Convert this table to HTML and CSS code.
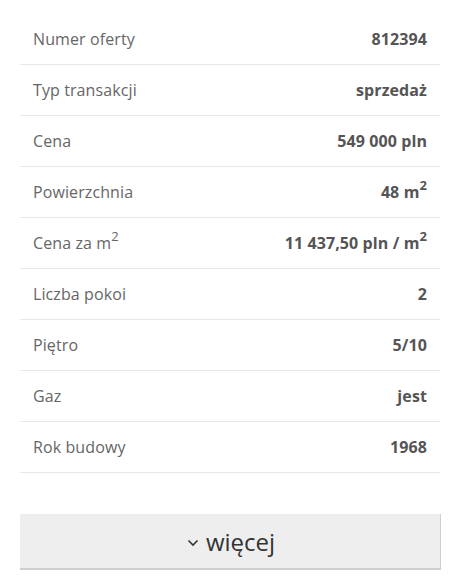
FILE: index.html
```html
<!DOCTYPE html>
<html lang="pl">
<head>
<meta charset="utf-8">
<link rel="stylesheet" href="styles.css">
</head>
<body>
<div class="wrap">
  <div class="params">
    <div class="row"><span class="label">Numer oferty</span><span class="value">812394</span></div>
    <div class="row"><span class="label">Typ transakcji</span><span class="value">sprzedaż</span></div>
    <div class="row"><span class="label">Cena</span><span class="value">549 000 pln</span></div>
    <div class="row"><span class="label">Powierzchnia</span><span class="value">48 m<sup>2</sup></span></div>
    <div class="row"><span class="label">Cena za m<sup>2</sup></span><span class="value">11 437,50 pln / m<sup>2</sup></span></div>
    <div class="row"><span class="label">Liczba pokoi</span><span class="value">2</span></div>
    <div class="row"><span class="label">Piętro</span><span class="value">5/10</span></div>
    <div class="row"><span class="label">Gaz</span><span class="value">jest</span></div>
    <div class="row"><span class="label">Rok budowy</span><span class="value">1968</span></div>
  </div>
  <button class="more">
    <svg class="chev" width="12" height="8" viewBox="0 0 12 8"><path d="M1.5 1.5 L6 6 L10.5 1.5" fill="none" stroke="#333" stroke-width="1.6"/></svg>
    <span>więcej</span>
  </button>
</div>
</body>
</html>
```
FILE: styles.css
```css
html, body { margin: 0; padding: 0; background: #fff; }
body { font-family: "Open Sans", "Liberation Sans", sans-serif; }
.wrap { padding: 14px 20px 0 20px; width: 420px; }
.params { display: flex; flex-direction: column; }
.row {
  display: flex;
  justify-content: space-between;
  align-items: center;
  height: 50px;
  border-bottom: 1px solid #e8e8e8;
  padding: 0 13px;
  font-size: 16px;
  letter-spacing: 0.1px;
}
.label { color: #666; }
.value { color: #555; font-weight: 700; }
sup { font-size: 13px; line-height: 0; vertical-align: 0.6em; }
.more {
  margin-top: 41px;
  width: 421px;
  height: 56px;
  background: #eeeeee;
  border: 0;
  border-right: 1px solid #cfcfcf;
  border-bottom: 2px solid #cfcfcf;
  display: flex;
  align-items: center;
  justify-content: center;
  gap: 7px;
  font-family: "Open Sans", "Liberation Sans", sans-serif;
  font-size: 24px;
  color: #333;
  padding: 0 0 0 2px;
}
.chev { margin-top: 3px; }
```
